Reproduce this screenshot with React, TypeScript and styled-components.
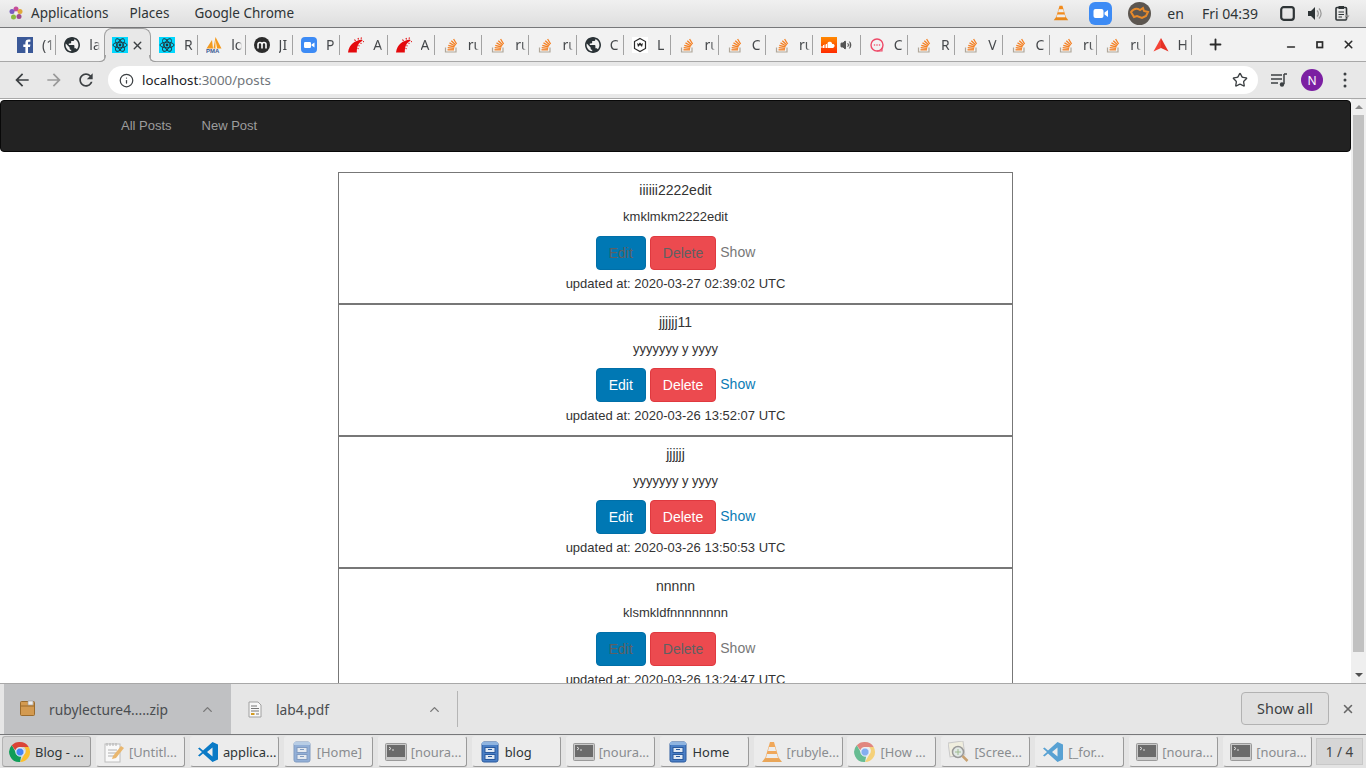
import React from "react";
import styled, { createGlobalStyle } from "styled-components";
import { Info, Star, Plus, Minus, X, ChevronUp, Volume2 } from "lucide-react";

const Global = createGlobalStyle`
  html, body { margin: 0; padding: 0; overflow: hidden; background: #fff; }
  * { box-sizing: border-box; }
`;
const UI = `"Noto Sans", "Open Sans", sans-serif`;
const WEB = `"Liberation Sans", Arial, sans-serif`;

const Screen = styled.div`display:flex;flex-direction:column;width:1366px;height:768px;overflow:hidden;font-family:${UI};`;

const TopBar = styled.header`
  display:flex;align-items:center;height:28px;flex:none;padding:0 16px 1px 9px;color:#2e3436;font-size:13.5px;
  background:linear-gradient(#f0f0f0,#dedede);border-bottom:1px solid #77787a;
`;
const MenuItem = styled.span<{ $gap?: number }>`margin-left:${p => p.$gap ?? 0}px;white-space:nowrap;`;
const Clock = styled(MenuItem)`font-size:14px;`;
const Tray = styled.div`display:flex;align-items:center;margin-left:auto;`;
const TrayIcon = styled.span<{ $left: number }>`display:flex;margin-left:${p => p.$left}px;`;

const TabStrip = styled.nav`
  display:flex;align-items:stretch;height:34px;flex:none;padding-left:9px;background:#f2f2f2;border-bottom:1px solid #a8a8a8;
`;
const Tab = styled.div<{ $active?: boolean; $noSep?: boolean }>`
  position:relative;display:flex;align-items:center;flex:0 0 47.32px;padding-left:8px;height:${p => p.$active ? 34 : 33}px;
  background:${p => p.$active ? "#e8e8e8" : "transparent"};
  ${p => p.$active ? "border:1px solid #a0a0a0;border-bottom:0;border-radius:8px 8px 0 0;z-index:1;padding-left:7px;padding-bottom:1px;" : ""}
  &::after{
    content:"";position:absolute;right:0;top:7px;height:20px;width:1px;background:${p => p.$noSep ? "transparent" : "#a3a3a3"};
  }
  ${p => p.$active ? `
    &::before, &::after{
      content:"";position:absolute;top:auto;bottom:0;width:6px;height:6px;background:transparent;
    }
    &::before{left:-6px;right:auto;border-right:1px solid #a0a0a0;border-bottom:1px solid #a0a0a0;border-bottom-right-radius:6px;box-shadow:2px 2px 0 #e8e8e8;}
    &::after{right:-6px;border-left:1px solid #a0a0a0;border-bottom:1px solid #a0a0a0;border-bottom-left-radius:6px;box-shadow:-2px 2px 0 #e8e8e8;}
  ` : ""}
`;
const TabText = styled.span`
  margin-left:9px;width:11px;overflow:hidden;white-space:nowrap;font-size:14px;color:#45484b;line-height:20px;
  -webkit-mask-image:linear-gradient(90deg,#000 65%,transparent);mask-image:linear-gradient(90deg,#000 65%,transparent);
`;
const TabClose = styled.span`display:flex;margin-left:3px;color:#3c4043;`;
const StripButton = styled.span<{ $left: number; $drop?: number }>`display:flex;align-items:center;margin-left:${p => p.$left}px;padding-top:${p => p.$drop ?? 0}px;color:#2b2b2b;`;

const Toolbar = styled.div`
  display:flex;align-items:center;height:37px;flex:none;padding:4px 0 4px 12px;background:#e8e8e8;border-bottom:1px solid #a8a8a8;
`;
const NavIcon = styled.span<{ $left?: number }>`display:flex;margin-left:${p => p.$left ?? 0}px;`;
const Omnibox = styled.div`
  display:flex;align-items:center;width:1150px;height:28px;margin-left:12px;padding:0 10px 0 11px;background:#fff;border-radius:14px;font-size:13.3px;color:#202124;
`;
const Host = styled.span`margin-left:8px;`;
const UrlRest = styled.span`color:#70757a;`;
const OmniEnd = styled.span`display:flex;margin-left:auto;color:#3c4043;`;
const Avatar = styled.span`
  display:flex;align-items:center;justify-content:center;width:22px;height:22px;border-radius:50%;margin-left:13px;background:#7b1fa2;color:#fff;font-size:12px;
`;

const Viewport = styled.div`display:flex;flex:1;min-height:0;overflow:hidden;background:#fff;`;
const Page = styled.main`flex:1;min-width:0;padding-top:1px;font-family:${WEB};font-size:14px;color:#333;line-height:20px;`;
const Navbar = styled.div`
  height:52px;margin-bottom:20px;background:#222;border:1px solid #080808;border-radius:4px;padding-left:105px;display:flex;
`;
const NavLink = styled.a`padding:15px;color:#9d9d9d;height:50px;font-size:13px;`;
const PostList = styled.section`width:675px;margin:0 auto;`;
const Card = styled.article`
  display:flex;flex-direction:column;align-items:center;height:132px;border:1px solid #777;padding-top:7px;
`;
const PostTitle = styled.div`font-size:14px;height:20px;`;
const PostBody = styled.p`margin:7px 0 0;font-size:13px;height:20px;line-height:20px;`;
const Actions = styled.div`display:flex;align-items:flex-start;gap:4px;margin-top:9px;height:34px;`;
const ActionButton = styled.a<{ $tone: "blue" | "red"; $muted?: boolean }>`
  display:flex;align-items:center;justify-content:center;height:34px;padding:0 12px;border-radius:4px;font-size:14px;
  color:${p => p.$muted ? "#5f6062" : "#fff"};
  background:${p => p.$tone === "blue" ? "#0078b4" : "#ec4a4f"};
  border:1px solid ${p => p.$tone === "blue" ? "#006fa8" : "#e0393f"};
`;
const ShowLink = styled.a<{ $muted?: boolean }>`margin-top:6px;color:${p => p.$muted ? "#777" : "#0a7bb5"};`;
const Updated = styled.div`margin-top:4px;font-size:13px;height:20px;`;

const Scrollbar = styled.div`width:15px;flex:none;display:flex;flex-direction:column;background:#efefef;`;
const ScrollArrow = styled.div<{ $down?: boolean }>`
  height:16px;flex:none;display:flex;align-items:center;justify-content:center;
  &::before{content:"";width:0;height:0;border-left:4px solid transparent;border-right:4px solid transparent;
  ${p => p.$down ? "border-top:4px solid #505050;" : "border-bottom:4px solid #8a8a8a;"}}
`;
const ScrollThumb = styled.div`height:537px;margin:0 2px;background:#c1c1c1;`;
const ScrollGap = styled.div`flex:1;`;

const DownloadBar = styled.footer`
  display:flex;align-items:stretch;height:52px;flex:none;padding-left:4px;background:#e6e6e6;border-top:1px solid #a8a8a8;border-bottom:1px solid #77787a;color:#4a4d50;
`;
const DownloadItem = styled.div<{ $hot?: boolean }>`
  position:relative;display:flex;align-items:center;width:227px;font-size:13.8px;padding-left:${p => p.$hot ? 16 : 17}px;
  background:${p => p.$hot ? "#c0c1c3" : "transparent"};
  border-right:1px solid ${p => p.$hot ? "transparent" : "#b5b5b5"};
  margin:${p => p.$hot ? "0" : "7px 0"};
`;
const DownloadName = styled.span<{ $left: number }>`margin-left:${p => p.$left}px;white-space:nowrap;`;
const Caret = styled.span`display:flex;margin-left:auto;margin-right:15px;color:#777;`;
const ShowAll = styled.button`
  margin:8px 0 8px auto;width:88px;height:33px;border:1px solid #b2b2b2;border-radius:4px;background:#e0e0e0;font:14.4px ${UI};color:#3c4043;padding:0;
`;
const BarClose = styled.span`display:flex;align-items:center;margin:0 11px 0 12px;color:#666;`;

const TaskBar = styled.div`display:flex;align-items:center;height:33px;flex:none;padding:0 3px 0 2px;gap:4.95px;background:#e4e4e4;`;
const TaskButton = styled.div<{ $active?: boolean; $dim?: boolean }>`
  display:flex;align-items:center;width:89px;height:31px;flex:none;padding:0 0 0 6px;gap:4px;border-radius:3px;font-size:12.9px;white-space:nowrap;overflow:hidden;
  color:${p => p.$dim ? "#8a8d90" : "#2e3436"};
  background:${p => p.$active ? "#d4d4d4" : "#ececec"};
  border:1px solid ${p => p.$active ? "#b4b4b4" : "#ececec"};
  border-bottom-color:#9a9a9a;border-right-color:#9a9a9a;
`;
const Pager = styled.div`
  display:flex;align-items:center;justify-content:center;width:47px;height:27px;margin-left:-1px;background:#d6d6d6;border:1px solid #c8c8c8;color:#444;font-size:13.5px;
`;

type Fav = "fb" | "globe" | "react" | "pma" | "moodle" | "zoom" | "rails" | "so" | "hex" | "sc" | "chat" | "red";
const Favicon = ({ k }: { k: Fav }) => {
  const s = { width: 16, height: 16, viewBox: "0 0 16 16", style: { flex: "none" } };
  switch (k) {
    case "fb": return <svg {...s}><rect width="16" height="16" fill="#3b5998" /><path d="M11 16v-6h2l.4-2.500H11V6c0-.8.3-1.200 1.200-1.200h1.200V2.600C13 2.500 12.300 2.500 11.500 2.500 9.600 2.500 8.400 3.600 8.400 5.700v1.800H6.300V10h2.100v6z" fill="#fff" /></svg>;
    case "globe": return <svg {...s} viewBox="2 2 20 20"><path fill="#2a3236" d="M12 2C6.480 2 2 6.480 2 12s4.480 10 10 10 10-4.480 10-10S17.520 2 12 2zm-1 17.930c-3.950-.490-7-3.850-7-7.930 0-.620.080-1.210.210-1.790L9 15v1c0 1.100.900 2 2 2v1.930zm6.900-2.540c-.260-.810-1-1.390-1.900-1.390h-1v-3c0-.550-.450-1-1-1H8v-2h2c.550 0 1-.450 1-1V7h2c1.100 0 2-.900 2-2v-.410c2.930 1.190 5 4.060 5 7.410 0 2.080-.800 3.970-2.100 5.390z" /></svg>;
    case "react": return <svg {...s}><rect width="16" height="16" fill="#00d8ff" /><g fill="none" stroke="#20323a" strokeWidth=".9"><ellipse cx="8" cy="8" rx="7" ry="2.800" /><ellipse cx="8" cy="8" rx="7" ry="2.800" transform="rotate(60 8 8)" /><ellipse cx="8" cy="8" rx="7" ry="2.800" transform="rotate(120 8 8)" /></g><circle cx="8" cy="8" r="1.400" fill="#20323a" /></svg>;
    case "pma": return <svg {...s}><path d="M.5 11.500 6 3l1 8.500zM7.500 11.500 9.500 0 15.500 11.500z" fill="#f39a1f" /><path d="M9.500 2.500 11 11.500h-1.500z" fill="#fff" /><text x="0" y="16" fontSize="6" fontWeight="700" fontFamily="Liberation Sans" fill="#3a5a95">PMA</text></svg>;
    case "moodle": return <svg {...s}><circle cx="8" cy="8" r="8" fill="#2c2c2c" /><path d="M4 11.500V7.500a1.700 1.700 0 0 1 4 0v4M8 7.500a1.700 1.700 0 0 1 4 0v4" fill="none" stroke="#fff" strokeWidth="1.600" /></svg>;
    case "zoom": return <svg {...s}><rect width="16" height="16" rx="4" fill="#3d8bf5" /><rect x="3" y="5" width="7" height="6" rx="1.200" fill="#fff" /><path d="m10.500 7.500 3-2v5l-3-2z" fill="#fff" /></svg>;
    case "rails": return <svg {...s}><path d="M0 15.500C.5 11 2.500 8 4.500 6.500 7 4.500 10 3 14 2.500l.5 1.200C11.500 5 9.500 8 9 11.500c-.2 1.300-.2 2.700-.2 4z" fill="#e4090c" /><path d="M6.500 2.500 7.500 4M10 1l.5 1.500M13.500 .5 13 1.800M15 4.500l1 .3M12.500 6l1 .6M10.500 8.500l1 .6M9.500 11.500l1.200.3" stroke="#e4090c" strokeWidth="1.100" /></svg>;
    case "so": return <svg {...s}><path d="M2.500 10.500V15h10.500v-4.500" fill="none" stroke="#b0a79a" strokeWidth="1.200" /><g stroke="#f48024" strokeWidth="1.300"><path d="M4.500 12.800h6.500" /><path d="M4.700 10.700l6.400.6" /><path d="M5.300 8.300l6.200 1.700" /><path d="M6.500 5.900l5.600 3.100" /><path d="M8.300 3.800l4.500 4.200" /><path d="M10.600 2l3 5" /></g></svg>;
    case "hex": return <svg {...s}><rect width="16" height="16" fill="#fff" /><path d="M8 1.500 13.500 4.500v7L8 14.500 2.500 11.500v-7z" fill="none" stroke="#2a2a2a" strokeWidth="1.200" /><path d="m5 6 1 4 2-2 2 2 1-4-1.500 1L8 5.500 6.500 7z" fill="#2a2a2a" /></svg>;
    case "sc": return <svg {...s}><defs><linearGradient id="scg" x1="0" y1="0" x2="0" y2="1"><stop offset="0" stopColor="#ff8a00" /><stop offset="1" stopColor="#ff2a00" /></linearGradient></defs><rect width="16" height="16" fill="url(#scg)" /><path d="M6.500 11V6c.6-1 1.700-1.500 2.800-1.200 1 .3 1.800 1.200 1.900 2.200 1.100-.4 2.300.3 2.400 1.500 0 1.300-1 2.500-2 2.500z" fill="#fff" /><path d="M1 9v2M2.500 8v3M4 7.500V11M5.500 7v4" stroke="#fff" /></svg>;
    case "chat": return <svg {...s}><circle cx="8" cy="8" r="6" fill="none" stroke="#ee4a68" strokeWidth="1.400" /><path d="M8 14h5v-3" fill="none" stroke="#ee4a68" strokeWidth="1.200" /><circle cx="5.500" cy="8" r=".8" fill="#ee4a68" /><circle cx="8" cy="8" r=".8" fill="#ee4a68" /><circle cx="10.500" cy="8" r=".8" fill="#ee4a68" /></svg>;
    case "red": return <svg {...s}><path d="M8 1 .5 14.500 8 11z" fill="#f44336" /><path d="M8 1l7.500 13.500L8 11z" fill="#e53125" /></svg>;
  }
};

const ChromeLogo = ({ dim }: { dim?: boolean }) => (
  <svg width="22" height="22" viewBox="0 0 24 24" style={{ flex: "none", opacity: dim ? 0.6 : 1 }}>
    <path d="M12 1a11 11 0 0 1 9.500 5.500H12a5.500 5.500 0 0 0-5.200 3.700L3 4.700A11 11 0 0 1 12 1z" fill="#db4437" />
    <path d="M21.500 6.500A11 11 0 0 1 12 23l4.700-8.200A5.500 5.500 0 0 0 16.500 6.500z" fill="#fbc02d" />
    <path d="M12 23A11 11 0 0 1 3 4.700l4.700 8.100a5.500 5.500 0 0 0 5.600 3.700z" fill="#0f9d58" />
    <circle cx="12" cy="12" r="4.500" fill="#4285f4" stroke="#fff" strokeWidth="1" />
  </svg>
);
const Notepad = () => (
  <svg width="22" height="22" viewBox="0 0 22 22" style={{ flex: "none", opacity: .7 }}>
    <rect x="2" y="3" width="15" height="18" fill="#fff" stroke="#aaa" />
    <path d="M4 2v3M7 2v3M10 2v3M13 2v3M5 9h9M5 12h9M5 15h7" stroke="#999" />
    <path d="m10 15 8-10 3 2-8 10-4 1z" fill="#e9a13b" />
  </svg>
);
const VSCode = ({ dim }: { dim?: boolean }) => (
  <svg width="22" height="22" viewBox="0 0 22 22" style={{ flex: "none", opacity: dim ? 0.65 : 1 }}>
    <path d="M15.500 1 21 3.500v15L15.500 21 6 12.500 2.500 15.500 1 14.500 5 11 1 7.500l1.500-1L6 9.500zM15.500 6.500 10 11l5.500 4.500z" fill="#0a7ac6" />
  </svg>
);
const Cabinet = ({ dim }: { dim?: boolean }) => (
  <svg width="18" height="22" viewBox="0 0 18 22" style={{ flex: "none", opacity: dim ? 0.55 : 1, margin: "0 2px" }}>
    <rect x="1" y="1" width="16" height="20" rx="2" fill="#4a7fc6" stroke="#2a5a9e" />
    <rect x="1" y="1" width="16" height="3" fill="#8fb4e0" />
    <rect x="4" y="6.500" width="10" height="5" fill="#dfe8f3" stroke="#2a5a9e" />
    <rect x="4" y="13.500" width="10" height="5" fill="#dfe8f3" stroke="#2a5a9e" />
    <path d="M7 8.500h4M7 15.500h4" stroke="#2a5a9e" />
  </svg>
);
const Terminal = () => (
  <svg width="22" height="18" viewBox="0 0 22 18" style={{ flex: "none" }}>
    <rect x=".5" y=".5" width="21" height="17" rx="1" fill="#c9c9c9" stroke="#9a9a9a" />
    <rect x="2" y="2" width="18" height="12" fill="#6b6b6b" />
    <path d="M4 4l2 1.500L4 7M7 7h2" stroke="#ddd" fill="none" />
  </svg>
);
const Cone = ({ size = 22, dim }: { size?: number; dim?: boolean }) => (
  <svg width={size} height={size} viewBox="0 0 22 22" style={{ flex: "none", opacity: dim ? 0.7 : 1 }}>
    <path d="M1 21l3-4h14l3 4z" fill="#e8891c" />
    <path d="M9 1h4l5 17H4z" fill="#f28b1c" />
    <path d="M8 6h6l1 4H7zM6 13h10l1 4H5z" fill="#eee" />
  </svg>
);
const Magnifier = () => (
  <svg width="22" height="22" viewBox="0 0 22 22" style={{ flex: "none", opacity: .7 }}>
    <rect x="1" y="1" width="15" height="14" fill="#f3efd9" stroke="#bbb" transform="rotate(-8 8 8)" />
    <circle cx="10" cy="11" r="5.500" fill="#dfe8e4" stroke="#777" strokeWidth="1.500" />
    <path d="M7 11h6M10 8v6" stroke="#7fa86a" />
    <path d="m14.500 15 5 5" stroke="#b8823e" strokeWidth="2.500" />
  </svg>
);
const Petals = () => (
  <svg width="14" height="14" viewBox="0 0 14 14">
    <circle cx="7" cy="3" r="2.500" fill="#c64d9a" /><circle cx="11" cy="5.500" r="2.500" fill="#e0a93a" />
    <circle cx="10" cy="10.500" r="2.500" fill="#a14d8c" /><circle cx="4.500" cy="11" r="2.500" fill="#8cba3f" />
    <circle cx="3" cy="5.500" r="2.500" fill="#7a5ec0" /><circle cx="7" cy="7" r="1.500" fill="#f0f0f0" />
  </svg>
);

const tabs: { k: Fav; t?: string; active?: boolean; noSep?: boolean; sound?: boolean }[] = [
  { k: "fb", t: "(1" }, { k: "globe", t: "la", noSep: true }, { k: "react", active: true, noSep: true },
  { k: "react", t: "R" }, { k: "pma", t: "lo" }, { k: "moodle", t: "JI" }, { k: "zoom", t: "P" },
  { k: "rails", t: "A" }, { k: "rails", t: "A" }, { k: "so", t: "ru" }, { k: "so", t: "ru" }, { k: "so", t: "ru" },
  { k: "globe", t: "C" }, { k: "hex", t: "L" }, { k: "so", t: "ru" }, { k: "so", t: "C" }, { k: "so", t: "ru" },
  { k: "sc", sound: true }, { k: "chat", t: "C" }, { k: "so", t: "R" }, { k: "so", t: "V" }, { k: "so", t: "C" },
  { k: "so", t: "ru" }, { k: "so", t: "ru" }, { k: "red", t: "H" },
];

const posts = [
  { title: "iiiiii2222edit", body: "kmklmkm2222edit", at: "2020-03-27 02:39:02 UTC", muted: true },
  { title: "jjjjjj11", body: "yyyyyyy y yyyy", at: "2020-03-26 13:52:07 UTC" },
  { title: "jjjjjj", body: "yyyyyyy y yyyy", at: "2020-03-26 13:50:53 UTC" },
  { title: "nnnnn", body: "klsmkldfnnnnnnnn", at: "2020-03-26 13:24:47 UTC", muted: true },
];

const tasks: { label: string; icon: React.ReactNode; active?: boolean; dim?: boolean }[] = [
  { label: "Blog - ...", icon: <ChromeLogo />, active: true },
  { label: "[Untitl...", icon: <Notepad />, dim: true },
  { label: "applica...", icon: <VSCode /> },
  { label: "[Home]", icon: <Cabinet dim />, dim: true },
  { label: "[noura...", icon: <Terminal />, dim: true },
  { label: "blog", icon: <Cabinet /> },
  { label: "[noura...", icon: <Terminal />, dim: true },
  { label: "Home", icon: <Cabinet /> },
  { label: "[rubyle...", icon: <Cone dim />, dim: true },
  { label: "[How ...", icon: <ChromeLogo dim />, dim: true },
  { label: "[Scree...", icon: <Magnifier />, dim: true },
  { label: "[_for...", icon: <VSCode dim />, dim: true },
  { label: "[noura...", icon: <Terminal />, dim: true },
  { label: "[noura...", icon: <Terminal />, dim: true },
];

export default function App() {
  return (
    <Screen>
      <Global />
      <TopBar>
        <Petals />
        <MenuItem $gap={8}>Applications</MenuItem>
        <MenuItem $gap={21}>Places</MenuItem>
        <MenuItem $gap={25}>Google Chrome</MenuItem>
        <Tray>
          <TrayIcon $left={0}><Cone size={16} /></TrayIcon>
          <TrayIcon $left={20}>
            <svg width="23" height="23" viewBox="0 0 23 23"><rect width="23" height="23" rx="6" fill="#3d8bf5" /><rect x="4.500" y="7" width="10" height="9" rx="2" fill="#fff" /><path d="m15.500 10.500 3.500-2.500v7l-3.500-2.500z" fill="#fff" /></svg>
          </TrayIcon>
          <TrayIcon $left={16}>
            <svg width="23" height="23" viewBox="0 0 23 23"><circle cx="11.500" cy="11.500" r="11.500" fill="#5c5650" /><path d="M3 10c3-4 6-4 9-2l3-2 1 3 4 1-2 4-4 2-5-2-3 1z" fill="none" stroke="#e88a2a" strokeWidth="2" /></svg>
          </TrayIcon>
          <Clock $gap={16}>en</Clock>
          <Clock $gap={18}>Fri 04:39</Clock>
          <TrayIcon $left={22}><svg width="15" height="15" viewBox="0 0 15 15"><rect x="1.200" y="1.200" width="12.600" height="12.600" rx="2.500" fill="none" stroke="#2e3436" strokeWidth="2.200" /></svg></TrayIcon>
          <TrayIcon $left={12}><svg width="15" height="15" viewBox="0 0 15 15"><path d="M1 5h3l4-4v13l-4-4H1z" fill="#2e3436" /><path d="M10 4.500a4 4 0 0 1 0 6M12 2.500a7 7 0 0 1 0 10" fill="none" stroke="#9a9a9a" strokeWidth="1.300" /></svg></TrayIcon>
          <TrayIcon $left={13}><svg width="15" height="16" viewBox="0 0 15 16"><rect x="1" y="2.500" width="10.500" height="12.500" rx="1" fill="none" stroke="#2e3436" strokeWidth="1.600" /><rect x="3.500" y="1" width="5.500" height="3" fill="#2e3436" /><path d="M3.500 7h5.500M3.500 9.500h5.500M3.500 12h3.500" stroke="#2e3436" /><path d="m12.500 8-2.500 4h2l-1 3 3.500-4.500h-2z" fill="#8a8a8a" /></svg></TrayIcon>
        </Tray>
      </TopBar>

      <TabStrip>
        {tabs.map((t, i) => (
          <Tab key={i} $active={t.active} $noSep={t.noSep}>
            <Favicon k={t.k} />
            {t.t && <TabText>{t.t}</TabText>}
            {t.active && <TabClose><X size={13} strokeWidth={2.600} /></TabClose>}
            {t.sound && <TabClose><Volume2 size={12} fill="#555" color="#555" strokeWidth={2} /></TabClose>}
          </Tab>
        ))}
        <StripButton $left={15}><Plus size={17} strokeWidth={2.600} /></StripButton>
        <StripButton $left={61} $drop={5}><Minus size={12} strokeWidth={2.800} /></StripButton>
        <StripButton $left={18}><svg width="10" height="10" viewBox="0 0 10 10"><rect x="2" y="2" width="5.500" height="5.500" fill="none" stroke="#2b2b2b" strokeWidth="1.700" /></svg></StripButton>
        <StripButton $left={17}><X size={13} strokeWidth={2.800} /></StripButton>
      </TabStrip>

      <Toolbar>
        <NavIcon><svg width="20" height="20" viewBox="0 0 24 24"><path fill="#3c4043" d="M20 11H7.830l5.590-5.590L12 4l-8 8 8 8 1.410-1.410L7.830 13H20v-2z" /></svg></NavIcon>
        <NavIcon $left={12}><svg width="20" height="20" viewBox="0 0 24 24"><path fill="#9a9a9a" d="M12 4l-1.410 1.410L16.170 11H4v2h12.170l-5.580 5.590L12 20l8-8z" /></svg></NavIcon>
        <NavIcon $left={12}><svg width="20" height="20" viewBox="0 0 24 24"><path fill="#3c4043" d="M17.650 6.350C16.200 4.900 14.210 4 12 4c-4.420 0-7.990 3.580-7.990 8s3.570 8 7.990 8c3.730 0 6.840-2.550 7.730-6h-2.080c-.820 2.330-3.040 4-5.650 4-3.310 0-6-2.690-6-6s2.690-6 6-6c1.660 0 3.140.690 4.220 1.780L13 11h7V4l-2.350 2.350z" /></svg></NavIcon>
        <Omnibox>
          <Info size={15} color="#3c4043" strokeWidth={2} />
          <Host>localhost<UrlRest>:3000/posts</UrlRest></Host>
          <OmniEnd><Star size={16} strokeWidth={2} /></OmniEnd>
        </Omnibox>
        <NavIcon $left={12}><svg width="18" height="18" viewBox="0 0 18 18"><path d="M1 4h11M1 8h11M1 12h7" stroke="#3c4043" strokeWidth="1.500" /><path d="M14 3v10" stroke="#3c4043" strokeWidth="1.500" /><circle cx="12" cy="13.500" r="2.200" fill="#3c4043" /><path d="M14 3h3" stroke="#3c4043" strokeWidth="1.500" /></svg></NavIcon>
        <Avatar>N</Avatar>
        <NavIcon $left={20}><svg width="4" height="16" viewBox="0 0 4 16"><circle cx="2" cy="2" r="1.500" fill="#3c4043" /><circle cx="2" cy="8" r="1.500" fill="#3c4043" /><circle cx="2" cy="14" r="1.500" fill="#3c4043" /></svg></NavIcon>
      </Toolbar>

      <Viewport>
        <Page>
          <Navbar>
            <NavLink>All Posts</NavLink>
            <NavLink>New Post</NavLink>
          </Navbar>
          <PostList>
            {posts.map((p, i) => (
              <Card key={i}>
                <PostTitle>{p.title}</PostTitle>
                <PostBody>{p.body}</PostBody>
                <Actions>
                  <ActionButton $tone="blue" $muted={p.muted}>Edit</ActionButton>
                  <ActionButton $tone="red" $muted={p.muted}>Delete</ActionButton>
                  <ShowLink $muted={p.muted}>Show</ShowLink>
                </Actions>
                <Updated>updated at: {p.at}</Updated>
              </Card>
            ))}
          </PostList>
        </Page>
        <Scrollbar>
          <ScrollArrow />
          <ScrollThumb />
          <ScrollGap />
          <ScrollArrow $down />
        </Scrollbar>
      </Viewport>

      <DownloadBar>
        <DownloadItem $hot>
          <svg width="16" height="18" viewBox="0 0 16 18"><rect x=".5" y="1.500" width="14" height="14" rx="1" fill="#d39a50" stroke="#9b6b2c" /><path d="M1 6h13" stroke="#9b6b2c" /><path d="M8 1h5v4H8z" fill="#eee" stroke="#999" strokeWidth=".6" /></svg>
          <DownloadName $left={13}>rubylecture4.....zip</DownloadName>
          <Caret><ChevronUp size={15} strokeWidth={2.200} /></Caret>
        </DownloadItem>
        <DownloadItem>
          <svg width="14" height="17" viewBox="0 0 14 17"><path d="M1 1h9l3 3v12H1z" fill="#f8f8f8" stroke="#a0a0a0" /><path d="M3 5h6M3 7.500h8M3 10h8" stroke="#777" /><rect x="3" y="12" width="3.500" height="2" fill="#d39a20" /><path d="M8 13h3" stroke="#777" /></svg>
          <DownloadName $left={14}>lab4.pdf</DownloadName>
          <Caret><ChevronUp size={15} strokeWidth={2.200} /></Caret>
        </DownloadItem>
        <ShowAll>Show all</ShowAll>
        <BarClose><X size={14} strokeWidth={2.600} /></BarClose>
      </DownloadBar>

      <TaskBar>
        {tasks.map((t, i) => (
          <TaskButton key={i} $active={t.active} $dim={t.dim}>{t.icon}<span>{t.label}</span></TaskButton>
        ))}
        <Pager>1 / 4</Pager>
      </TaskBar>
    </Screen>
  );
}
